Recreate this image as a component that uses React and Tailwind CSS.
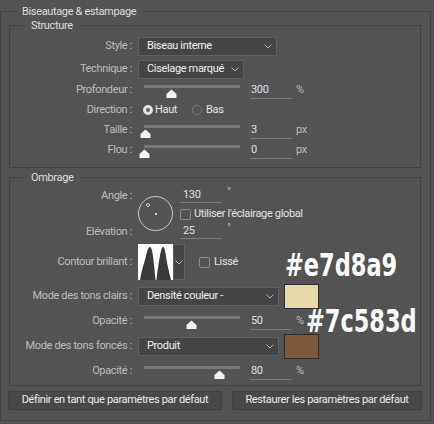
import React from 'react';

const font = { fontFamily: 'Roboto, "Liberation Sans", Arial, sans-serif' };

function Chevron() {
  return (
    <svg width="8" height="5" viewBox="0 0 8 5" className="shrink-0">
      <polyline points="0.5,0.5 4,4 7.5,0.5" fill="none" stroke="#b4b4b4" strokeWidth="1" />
    </svg>
  );
}

function Select({ value, className }) {
  return (
    <div className={`flex items-center justify-between h-[19px] pl-[8px] pr-[4px] bg-[#454545] border border-[#616161] text-[#efefef] ${className}`}>
      <span>{value}</span>
      <Chevron />
    </div>
  );
}

function Label({ children }) {
  return <div className="w-[122px] shrink-0 text-right text-[#bebebe]">{children}</div>;
}

function Thumb({ pct }) {
  return (
    <svg
      width="11"
      height="9"
      viewBox="0 0 11 9"
      className="absolute top-[9px]"
      style={{ left: `calc(${pct}% - 5.5px)` }}
    >
      <path d="M5.5 0.5 L10.5 5 L10.5 9 L0.5 9 L0.5 5 Z" fill="#f2f2f2" />
    </svg>
  );
}

function SliderRow({ label, pct, value, unit, className = '' }) {
  return (
    <div className={`flex items-center h-[20px] ${className}`}>
      <Label>{label}</Label>
      <div className="relative w-[96px] h-[20px] ml-[12px]">
        <div className="mt-[5px] h-[3px] bg-[#777777]" />
        <Thumb pct={pct} />
      </div>
      <div className="ml-[10px] w-[42px] h-[18px] border-b border-[#7b7b7b] pl-[1px] leading-[18px] text-[#d8e0ee]">{value}</div>
      <span className="ml-[4px] text-[#bdbdbd]">{unit}</span>
    </div>
  );
}

function Checkbox({ className = '' }) {
  return <div className={`w-[11px] h-[11px] shrink-0 rounded-[2px] border border-[#8c8c8c] ${className}`} />;
}

function Legend({ children, className = '' }) {
  return <legend className={`leading-[13px] text-[#dedede] ${className}`}>{children}</legend>;
}

export default function App() {
  return (
    <div className="relative w-[434px] h-[424px] overflow-hidden bg-[#535353] text-[11px] tracking-[-0.35px] pt-[5px]" style={font}>
      <fieldset className="w-[431px] h-[416px] border border-[#414141]">
        <Legend className="ml-[14px] px-[7px]">Biseautage &amp; estampage</Legend>

        {/* Structure */}
        <fieldset className="ml-[8px] mt-[1px] w-[412px] border border-[#414141] pb-[7px]">
          <Legend className="ml-[14px] px-[7px]">Structure</Legend>
          <div className="pt-[5px]">
            <div className="flex items-center">
              <Label>Style :</Label>
              <Select value="Biseau interne" className="ml-[6px] w-[139px]" />
            </div>
            <div className="flex items-center mt-[4px]">
              <Label>Technique :</Label>
              <Select value="Ciselage marqué" className="ml-[6px] w-[106px]" />
            </div>
            <SliderRow label="Profondeur :" pct={29} value="300" unit="%" className="mt-[1px]" />
            <div className="flex items-center h-[20px]">
              <Label>Direction :</Label>
              <div className="ml-[11px] w-[10px] h-[10px] rounded-full border-[3px] border-[#e4e4e4] bg-[#5c5c5c]" />
              <span className="ml-[2px] w-[37px] text-[#e6e6e6]">Haut</span>
              <div className="w-[10px] h-[10px] rounded-full border border-[#7a7a7a]" />
              <span className="ml-[4px] text-[#e6e6e6]">Bas</span>
            </div>
            <SliderRow label="Taille :" pct={2} value="3" unit="px" />
            <SliderRow label="Flou :" pct={0} value="0" unit="px" />
          </div>
        </fieldset>

        {/* Ombrage */}
        <fieldset className="ml-[8px] mt-[3px] w-[412px] border border-[#414141] pb-[4px]">
          <Legend className="ml-[14px] px-[7px]">Ombrage</Legend>
          <div className="flex mt-[2px]">
            <div className="w-[122px] shrink-0 flex flex-col text-right text-[#bebebe]">
              <div className="h-[20px] leading-[20px]">Angle :</div>
              <div className="h-[16px]" />
              <div className="h-[20px] leading-[20px]">Elévation :</div>
            </div>
            <div className="relative ml-[6px] mt-[10px] w-[35px] h-[35px] rounded-full border border-[#c6c6c6]">
              <div className="absolute left-[16px] top-[16px] w-[2px] h-[2px] bg-[#cfcfcf]" />
              <div className="absolute left-[7px] top-[6px] w-[4px] h-[4px] rounded-full border border-[#cfcfcf]" />
            </div>
            <div className="ml-[7px] flex flex-col">
              <div className="flex h-[20px]">
                <div className="w-[42px] h-[17px] border-b border-[#7b7b7b] pl-[3px] pt-[2px] leading-[13px] text-[#d8e0ee]">130</div>
                <span className="ml-[5px] leading-[12px] text-[#bdbdbd]">°</span>
              </div>
              <div className="flex items-center h-[16px]">
                <Checkbox />
                <span className="ml-[3px] text-[#e2e2e2]">Utiliser l'éclairage global</span>
              </div>
              <div className="flex h-[20px]">
                <div className="w-[42px] h-[17px] border-b border-[#7b7b7b] pl-[3px] pt-[2px] leading-[13px] text-[#d8e0ee]">25</div>
                <span className="ml-[5px] leading-[12px] text-[#bdbdbd]">°</span>
              </div>
            </div>
          </div>

          <div className="flex items-center mt-[2px] h-[36px]">
            <Label>Contour brillant :</Label>
            <svg width="35" height="36" viewBox="0 0 35 36" className="ml-[6px] shrink-0 bg-white">
              <path d="M2 36 C3 28 6 20 8 12 C9.5 5 11 3 12 3 C13 3 14 5 15 12 C16 20 17 30 17.5 36 Z" fill="#3a3a3a" />
              <path d="M18.5 36 C19 30 20.5 20 22 12 C23 5 24 3 25 3 C26 3 27 5 28 12 C29 20 31 28 33 36 Z" fill="#3a3a3a" />
            </svg>
            <div className="flex items-center justify-center w-[12px] h-[36px] bg-[#454545] border border-[#616161]">
              <Chevron />
            </div>
            <Checkbox className="ml-[14px]" />
            <span className="ml-[4px] text-[#e2e2e2]">Lissé</span>
          </div>

          <div className="flex items-center mt-[4px] h-[25px]">
            <Label>Mode des tons clairs :</Label>
            <Select value="Densité couleur -" className="ml-[6px] w-[141px]" />
            <div className="ml-[5px] w-[35px] h-[25px] bg-[#e7d8a9] border border-[#2b2b2b]" />
          </div>
          <SliderRow label="Opacité :" pct={49} value="50" unit="%" className="mt-[2px]" />

          <div className="flex items-center mt-[3px] h-[25px]">
            <Label>Mode des tons foncés :</Label>
            <Select value="Produit" className="ml-[6px] w-[141px]" />
            <div className="ml-[5px] w-[35px] h-[25px] bg-[#7c583d] border border-[#2b2b2b]" />
          </div>
          <SliderRow label="Opacité :" pct={79} value="80" unit="%" className="mt-[2px]" />
        </fieldset>

        <div className="flex mt-[5px] ml-[7px]">
          <div className="w-[214px] h-[19px] flex items-center justify-center bg-[#484848] border border-[#3e3e3e] text-[#ececec]">
            Définir en tant que paramètres par défaut
          </div>
          <div className="ml-[10px] w-[190px] h-[19px] flex items-center justify-center bg-[#484848] border border-[#3e3e3e] text-[#ececec]">
            Restaurer les paramètres par défaut
          </div>
        </div>
      </fieldset>

      {/* colour annotations over the dialog */}
      <div
        className="absolute left-[285px] top-[249px] text-[32px] leading-none font-bold tracking-normal text-white origin-left scale-x-[0.78] whitespace-nowrap"
        style={{ fontFamily: '"DejaVu Sans Condensed", "DejaVu Sans", sans-serif' }}
      >
        #e7d8a9
      </div>
      <div
        className="absolute left-[306px] top-[305px] text-[32px] leading-none font-bold tracking-normal text-white origin-left scale-x-[0.78] whitespace-nowrap"
        style={{ fontFamily: '"DejaVu Sans Condensed", "DejaVu Sans", sans-serif' }}
      >
        #7c583d
      </div>
    </div>
  );
}
